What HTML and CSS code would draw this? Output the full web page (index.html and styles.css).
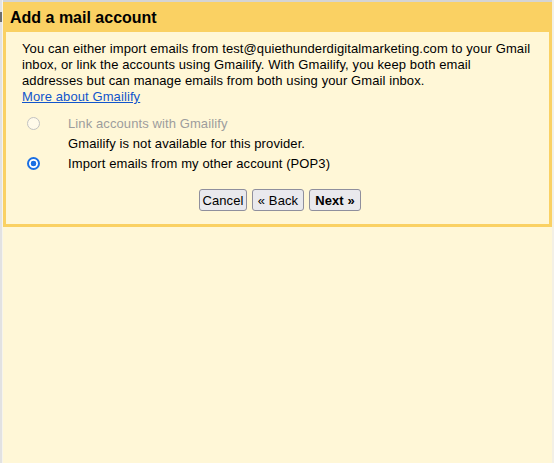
FILE: index.html
```html
<!DOCTYPE html>
<html>
<head>
<meta charset="utf-8">
<title>Add a mail account</title>
<link rel="stylesheet" href="styles.css">
</head>
<body>
<div class="page">
  <div class="edge-left"><span class="edge-mark"></span></div>
  <div class="main">
    <div class="topline"></div>
    <div class="dialog">
      <div class="title">Add a mail account</div>
      <div class="body">
        <p class="intro">You can either import emails from test@quiethunderdigitalmarketing.com to your Gmail<br>inbox, or link the accounts using Gmailify. With Gmailify, you keep both email<br>addresses but can manage emails from both using your Gmail inbox.<br><a class="link" href="#">More about Gmailify</a></p>
        <div class="options">
          <label class="opt disabled"><span class="radio-cell"><input class="radio" type="radio" name="mode" disabled></span><span class="opt-text">Link accounts with Gmailify</span></label>
          <div class="opt note"><span class="radio-cell"></span><span class="opt-text">Gmailify is not available for this provider.</span></div>
          <label class="opt last"><span class="radio-cell"><input class="radio" type="radio" name="mode" checked></span><span class="opt-text">Import emails from my other account (POP3)</span></label>
        </div>
        <div class="actions">
          <button class="btn btn-cancel">Cancel</button>
          <button class="btn btn-back">« Back</button>
          <button class="btn btn-next">Next »</button>
        </div>
      </div>
    </div>
  </div>
  <div class="edge-right"></div>
</div>
</body>
</html>
```
FILE: styles.css
```css
html, body {
  margin: 0;
  padding: 0;
}
body {
  background: #fff7d7;
  font-family: "Liberation Sans", Arial, sans-serif;
  font-size: 13px;
  color: #000;
}
.page {
  display: flex;
  min-height: 463px;
}
.edge-left {
  width: 2px;
  border-right: 1px solid #f6f4ec;
  background: #e2e2e2;
  display: flex;
  flex-direction: column;
}
.edge-mark {
  display: block;
  height: 10px;
  margin-top: 12px;
  background: #6e6e6e;
}
.main {
  flex: 1;
  display: flex;
  flex-direction: column;
}
.edge-right {
  width: 2px;
  background: #f3f0e6;
}
.topline {
  height: 2px;
  background: #d4d4d4;
}
.dialog {
  background: #fad163;
  padding: 0 3px 3px 3px;
}
.title {
  font-weight: bold;
  font-size: 16px;
  line-height: 18px;
  padding: 7px 4px 5px;
}
.body {
  background: #fff7d7;
  padding: 9px 6px 13px 16px;
  letter-spacing: 0.1px;
}
.intro {
  margin: 0;
  line-height: 16px;
  white-space: nowrap;
}
.link {
  color: #1155cc;
  text-decoration: underline;
}
.options {
  margin-top: 8px;
  display: flex;
  flex-direction: column;
}
.opt {
  display: grid;
  grid-template-columns: 46px 1fr;
  align-items: center;
  height: 20px;
}
.opt.last {
  height: 21px;
}
.radio-cell {
  display: flex;
  align-items: center;
}
.radio {
  appearance: none;
  -webkit-appearance: none;
  box-sizing: border-box;
  margin: 0 0 0 5px;
  width: 13px;
  height: 13px;
  border-radius: 50%;
  border: 1px solid #767676;
  background: #fff;
}
.radio:checked {
  border: 2px solid #1a6fe3;
  background: radial-gradient(circle, #1a6fe3 0 2.6px, #ffffff 3.1px);
}
.radio:disabled {
  border: 1.5px solid #c2c2c2;
  background: #fffaea;
}
.disabled .opt-text {
  color: #9d9d9d;
}
.actions {
  margin-top: 15px;
  display: flex;
  justify-content: center;
  gap: 5px;
  padding-right: 5px;
}
.btn {
  height: 22px;
  padding: 0;
  font-family: "Liberation Sans", Arial, sans-serif;
  font-size: 13px;
  letter-spacing: 0.1px;
  color: #000;
  background: #e9e9ed;
  border: 1px solid #8f8f9d;
  border-radius: 3px;
}
.btn-cancel { width: 48px; }
.btn-back { width: 52px; }
.btn-next { width: 52px; font-weight: bold; }
```
